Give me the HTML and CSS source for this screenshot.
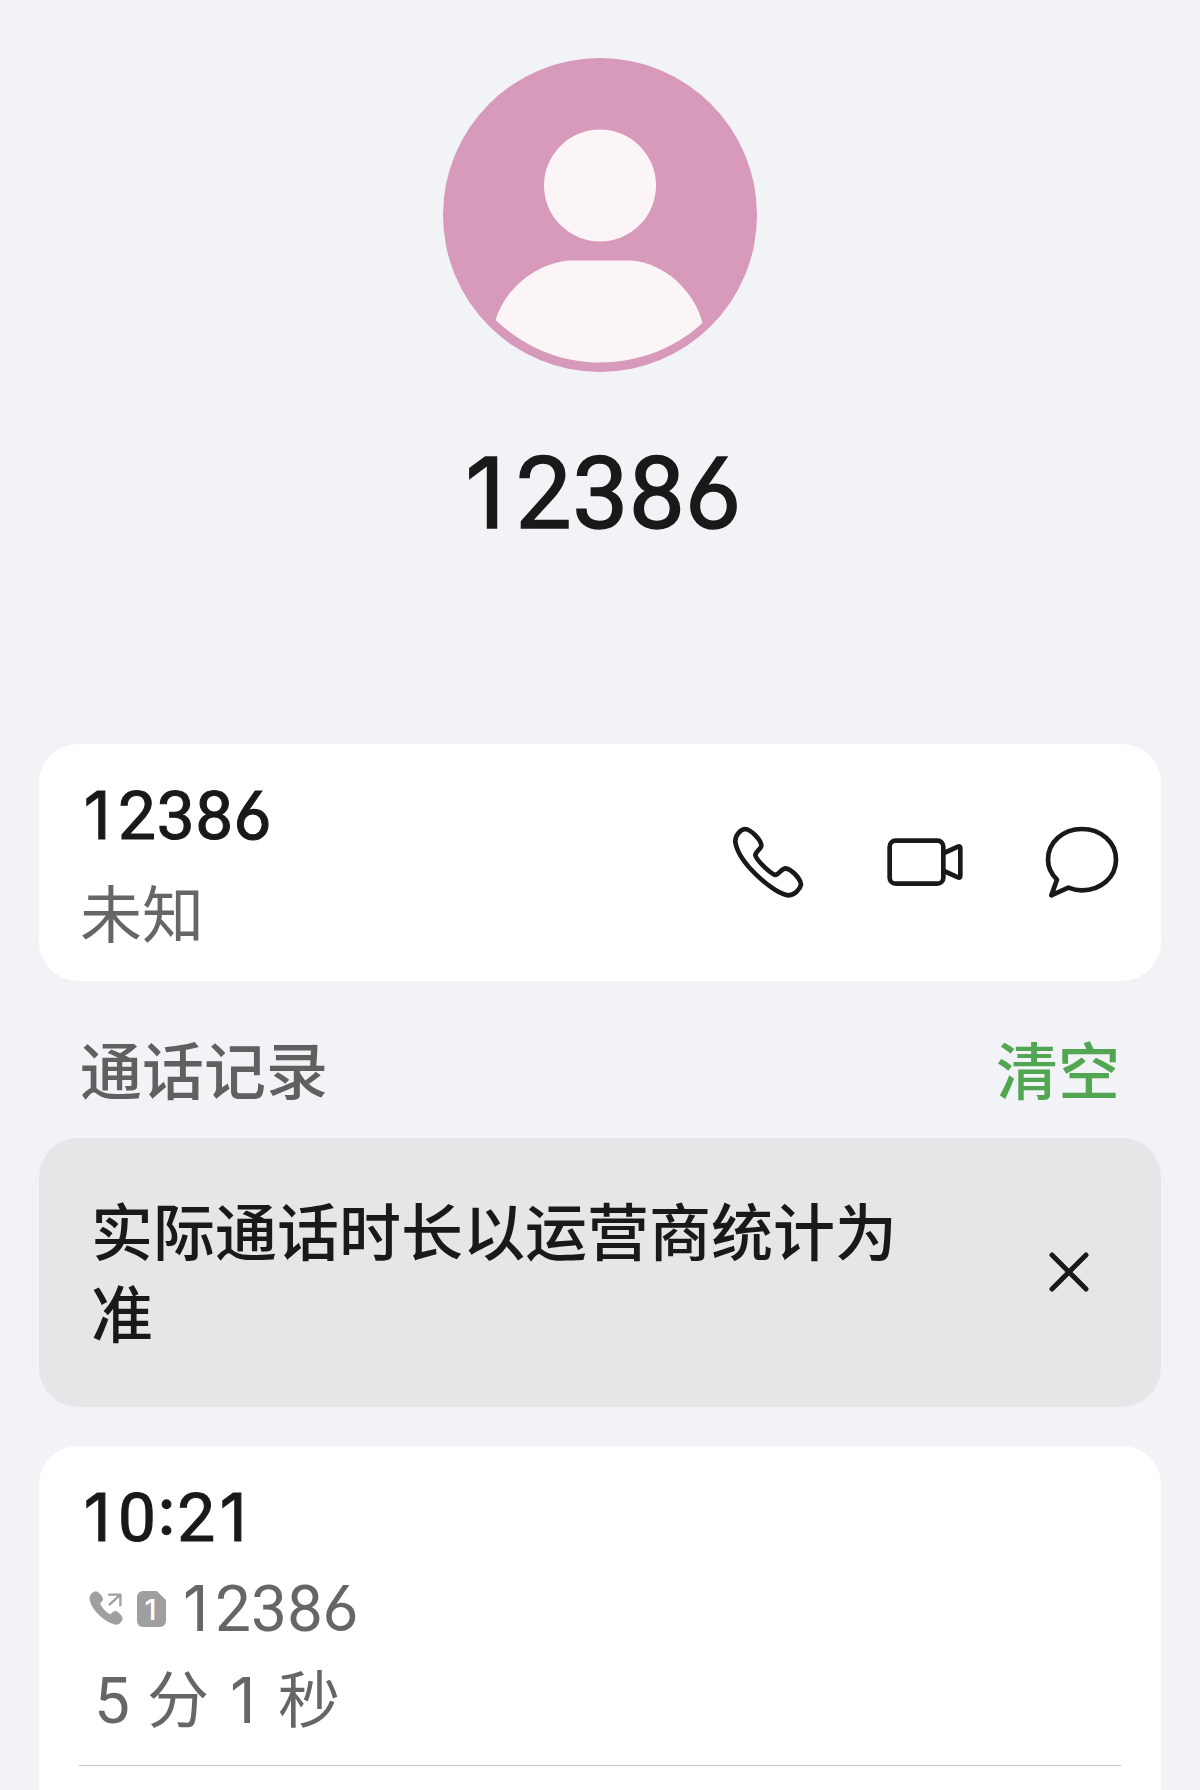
FILE: index.html
```html
<!DOCTYPE html>
<html lang="zh-CN">
<head>
<meta charset="utf-8">
<title>12386</title>
<link rel="stylesheet" href="styles.css">
</head>
<body>
<main class="page">
  <header class="profile">
    <svg class="avatar" viewBox="0 0 314 314">
      <circle class="avatar-bg" cx="157" cy="157" r="157"/>
      <g class="avatar-person">
        <circle cx="157" cy="127.500" r="56"/>
        <path d="M126 202.500H188C221 205 251 232 259.500 265C232 290 196 304.500 157 304.500C116 304.500 80 288 52.500 262C62 230 94 205 126 202.500Z"/>
      </g>
    </svg>
    <h1 class="name"><span class="digit one">1</span>238<span class="digit">6</span></h1>
  </header>

  <section class="card contact">
    <div class="contact-info">
      <div class="number"><span class="digit one">1</span>238<span class="digit">6</span></div>
      <div class="place">未知</div>
    </div>
    <div class="actions">
      <svg class="icon" viewBox="84 97 240 240"><path d="M106 157C105 137 121 120 135 118C153 119 184 152 184 168C183 178 166 186 166 197C171 213 211 252 226 256C236 255 244 238 256 236C272 237 301 264 303 285C300 300 283 316 266 317C225 315 115 221 106 157Z"/></svg>
      <svg class="icon" viewBox="559 97 240 240"><rect x="573" y="153" width="161" height="129" rx="18"/><path d="M736 190L778 171Q785 168 785 175V259Q785 266 778 263L736 244"/></svg>
      <svg class="icon" viewBox="1027 97 240 240"><path d="M1072 270C1056 254 1045 234 1045 210C1045 158 1090 118 1147 118C1204 118 1249 158 1249 210C1249 262 1204 302 1147 302C1132 302 1119 299 1106 294L1055 317Z"/></svg>
    </div>
  </section>

  <div class="section-head">
    <h2 class="section-title">通话记录</h2>
    <span class="clear">清空</span>
  </div>

  <section class="notice">
    <p class="notice-text">实际通话时长以运营商统计为准</p>
    <svg class="close" viewBox="0 0 40 40"><path d="M3 3L37 37M37 3L3 37"/></svg>
  </section>

  <section class="card record">
    <div class="number"><span class="digit one">1</span>0<span class="digit colon">:</span>2<span class="digit one">1</span></div>
    <div class="record-line">
      <svg class="outgoing" viewBox="26 64 102 104"><path class="fill" d="M27 90C25 77 37 65 46 65C56 68 69 81 68 91C66 97 59 98 60 104C65 117 77 128 87 134C95 136 97 125 105 125C113 125 128 140 128 147C127 157 118 166 110 167C79 165 31 122 27 90Z"/><path class="arrow" d="M86 107L121 75M84 75H121V111"/></svg>
      <span class="sim">1</span>
      <span class="record-number"><span class="digit one">1</span>238<span class="digit">6</span></span>
    </div>
    <div class="duration"><span>5</span><span class="unit">分</span><span class="digit one">1</span><span class="unit second">秒</span></div>
    <hr class="divider">
  </section>
</main>
</body>
</html>
```

FILE: styles.css
```css
* { box-sizing: border-box; margin: 0; padding: 0; }

body {
  background: #f1f3f7;
  color: #191919;
  font-family: Roboto, "Noto Sans CJK SC", sans-serif;
}

.page {
  height: 1790px;
  padding: 58px 39px 0;
  overflow: hidden;
  display: flex;
  flex-direction: column;
}

.profile {
  height: 686px;
  flex: none;
  display: flex;
  flex-direction: column;
  align-items: center;
}

.avatar { width: 314px; height: 314px; }
.avatar-bg { fill: #d79aba; }
.avatar-person { fill: #fbf5f8; }

.name {
  margin: 61px 0 0 1px;
  font-size: 100px;
  font-weight: 400;
  line-height: 121px;
  letter-spacing: 0.5px;
  -webkit-text-stroke: 1.5px #191919;
}

/* Straight-stroked digits, set on the same advance as the other figures */
.digit {
  display: inline-flex;
  justify-content: center;
  width: 0.573em;
  font-family: Inter, Roboto, sans-serif;
  font-feature-settings: "cv03", "ss01";
  font-size: 0.98em;
  line-height: 1;
}

.one { padding-right: 0.04em; }

.card {
  background: #fff;
  border-radius: 39px;
}

.contact {
  height: 237px;
  flex: none;
  padding: 32px 39px 0 41px;
  display: flex;
  justify-content: space-between;
}

.number {
  font-size: 67.5px;
  font-weight: 400;
  line-height: 80px;
  letter-spacing: 0.8px;
  -webkit-text-stroke: 1.1px #191919;
}

.place {
  margin-top: 10px;
  font: 400 62px/90px "Noto Sans CJK SC", sans-serif;
  color: #666;
}

.actions {
  display: flex;
  gap: 77px;
  padding-top: 46px;
}

.icon {
  width: 80px;
  height: 80px;
  fill: none;
  stroke: #191919;
  stroke-width: 14;
  stroke-linejoin: round;
  stroke-linecap: round;
}

.section-head {
  height: 157px;
  flex: none;
  padding: 42px 41px 0;
  display: flex;
  justify-content: space-between;
}

.section-title, .clear {
  font: 500 62px/90px "Noto Sans CJK SC", sans-serif;
  color: #606060;
}

.clear { color: #52a652; }

.notice {
  height: 269px;
  flex: none;
  padding: 50px 72px 0 52px;
  display: flex;
  justify-content: space-between;
  background: #e5e6e8;
  border-radius: 39px;
}

.notice-text {
  width: 820px;
  font: 500 62px/82px "Noto Sans CJK SC", sans-serif;
}

.close {
  width: 40px;
  height: 40px;
  margin-top: 64px;
  fill: none;
  stroke: #191919;
  stroke-width: 5;
  stroke-linecap: round;
}

.record {
  flex: none;
  height: 390px;
  margin-top: 39px;
  padding: 32px 40px 0 41px;
}

.colon {
  width: 0.31em;
  font-feature-settings: "case";
}

.record-line {
  height: 80px;
  margin-top: 12px;
  padding-left: 9px;
  display: flex;
  font-size: 64px;
  line-height: 80px;
  color: #666;
}

.outgoing {
  width: 34px;
  height: 34px;
  margin-top: 21px;
}
.outgoing .fill { fill: #9f9f9f; }
.outgoing .arrow { fill: none; stroke: #9f9f9f; stroke-width: 7; }

.sim {
  width: 29px;
  height: 36px;
  margin: 21px 13px 0 14px;
  padding-right: 2px;
  background: #9f9f9f;
  border-radius: 6px;
  clip-path: polygon(0 0, 68% 0, 100% 25%, 100% 100%, 0 100%);
  color: #fff;
  font: 500 29px/38px Inter, Roboto, sans-serif;
  text-align: center;
}

.duration {
  height: 80px;
  margin-top: 9px;
  padding-left: 14px;
  display: flex;
  align-items: baseline;
  font-size: 64px;
  line-height: 80px;
  color: #666;
}

.unit {
  margin: 0 17px;
  font: 400 62px/75px "Noto Sans CJK SC", sans-serif;
}

.second { margin-left: 16px; }

.divider {
  height: 1px;
  margin: 26px 0 0 -1px;
  border: 0;
  background: #c4c4c4;
}
```
